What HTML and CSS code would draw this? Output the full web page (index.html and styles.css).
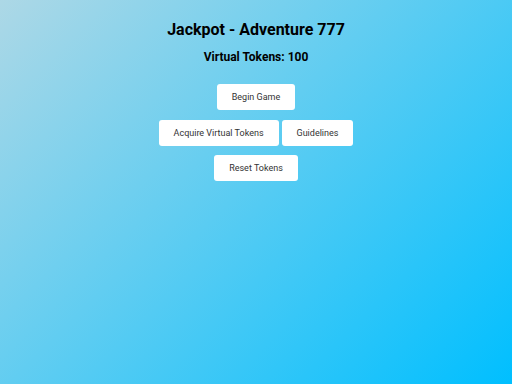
FILE: index.html
```html
<!DOCTYPE html>
<html>
<head>
<meta charset="utf-8">
<link rel="stylesheet" href="styles.css">
</head>
<body>
<div class="app">
  <h1 class="title">Jackpot - Adventure 777</h1>
  <div class="tokens">Virtual Tokens: 100</div>
  <div class="row"><button class="btn">Begin Game</button></div>
  <div class="row"><button class="btn">Acquire Virtual Tokens</button><button class="btn">Guidelines</button></div>
  <div class="row"><button class="btn">Reset Tokens</button></div>
</div>
</body>
</html>
```
FILE: styles.css
```css
html, body { margin: 0; height: 100%; }
body {
  font-family: Roboto, "Liberation Sans", sans-serif;
  background: linear-gradient(135deg, #add8e6, #00bfff);
  color: #000;
}
.app {
  display: flex;
  flex-direction: column;
  align-items: center;
  padding-top: 20px;
}
.title {
  font-size: 16px;
  font-weight: 700;
  margin: 0;
  line-height: 20px;
}
.tokens {
  font-size: 12px;
  font-weight: 700;
  margin-top: 9px;
  line-height: 16px;
}
.row {
  display: flex;
  gap: 3px;
  margin-top: 9.5px;
}
.tokens + .row { margin-top: 19px; }
.btn {
  font-family: Roboto, "Liberation Sans", sans-serif;
  font-size: 9px;
  color: #333;
  background: #fff;
  border: none;
  border-radius: 3px;
  height: 26px;
  padding: 0 15px;
  cursor: pointer;
}
```
